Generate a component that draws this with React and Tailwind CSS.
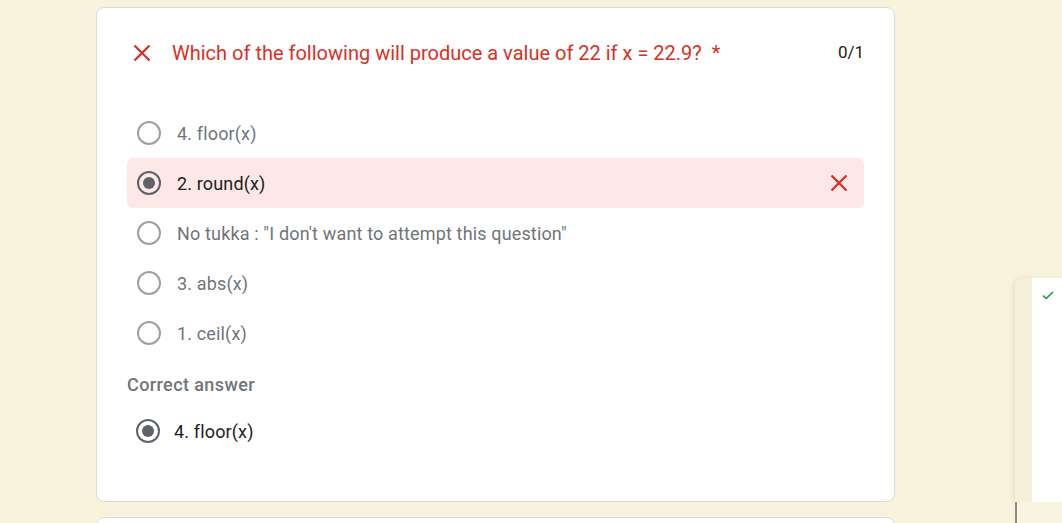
import React from 'react';

const options = [
  { label: '4. floor(x)', selected: false },
  { label: '2. round(x)', selected: true },
  { label: 'No tukka : "I don\'t want to attempt this question"', selected: false },
  { label: '3. abs(x)', selected: false },
  { label: '1. ceil(x)', selected: false },
];

function Cross({ size = 18 }) {
  return (
    <svg width={size} height={size} viewBox="0 0 18 18" className="shrink-0">
      <path d="M1.5 1.5 L16.5 16.5 M16.5 1.5 L1.5 16.5" stroke="#d93025" strokeWidth="2.3" fill="none" />
    </svg>
  );
}

function Radio({ selected }) {
  if (selected) {
    return (
      <div className="w-6 h-6 rounded-full border-2 border-[#5f6368] flex items-center justify-center shrink-0">
        <div className="w-3 h-3 rounded-full bg-[#5f6368]" />
      </div>
    );
  }
  return <div className="w-6 h-6 rounded-full border-2 border-[#9aa0a6] shrink-0" />;
}

export default function App() {
  return (
    <div className="relative w-full h-[523px] overflow-hidden bg-[#f9f2dc] font-['Roboto',sans-serif]">
      <div className="pt-[7px] pl-[96px] w-[895px]">
        {/* question card */}
        <div className="bg-white border border-[#dadce0] rounded-lg h-[495px] px-[30px]">
          <div className="flex items-center h-[46px] mt-[22px]">
            <div className="ml-[6px] mr-[21px] flex">
              <Cross />
            </div>
            <div className="flex-1 text-[20px] text-[#d93025]">
              Which of the following will produce a value of 22 if x = 22.9?
              <span className="ml-[10px]">*</span>
            </div>
            <div className="text-[17px] text-[#202124]">0/1</div>
          </div>

          <div className="mt-[32px] flex flex-col">
            {options.map((o, i) => (
              <div
                key={i}
                className={
                  o.selected
                    ? 'flex items-center h-[50px] pl-[10px] pr-[16px] rounded-md bg-[#fce8e6]'
                    : 'flex items-center h-[50px] pl-[10px] pr-[16px]'
                }
              >
                <Radio selected={o.selected} />
                <span
                  className={
                    o.selected
                      ? 'ml-4 flex-1 text-[18px] tracking-[0.15px] text-[#202124]'
                      : 'ml-4 flex-1 text-[18px] tracking-[0.15px] text-[#70757a]'
                  }
                >
                  {o.label}
                </span>
                {o.selected && <Cross />}
              </div>
            ))}
          </div>

          <div className="mt-[15px] text-[18px] font-medium text-[#70757a] tracking-[0.4px] leading-6">
            Correct answer
          </div>
          <div className="flex items-center h-[48px] mt-[10px] pl-[9px]">
            <Radio selected />
            <span className="ml-[14px] text-[18px] tracking-[0.15px] text-[#202124]">4. floor(x)</span>
          </div>
        </div>

        {/* next card peeking */}
        <div className="mt-[15px] bg-white border border-[#dadce0] rounded-lg h-[40px]" />
      </div>

      {/* side panel on the right edge */}
      <div className="absolute left-[1015px] top-[278px] w-[60px] h-[224px] rounded-tl-lg bg-[#f7f0d9] shadow-[-2px_0_4px_rgba(0,0,0,0.08)]">
        <div className="absolute left-[17px] top-0 bottom-0 right-0 bg-white">
          <svg width="12" height="9" viewBox="0 0 12 9" className="absolute left-[10px] top-[13px]">
            <path d="M1 4.5 L4.2 7.5 L11 1" stroke="#1e8e3e" strokeWidth="1.5" fill="none" />
          </svg>
        </div>
      </div>
      <div className="absolute left-[1015px] top-[502px] w-[60px] h-[30px] bg-[#faf4e2] border-l-2 border-[#8a8a8a]" />
    </div>
  );
}
